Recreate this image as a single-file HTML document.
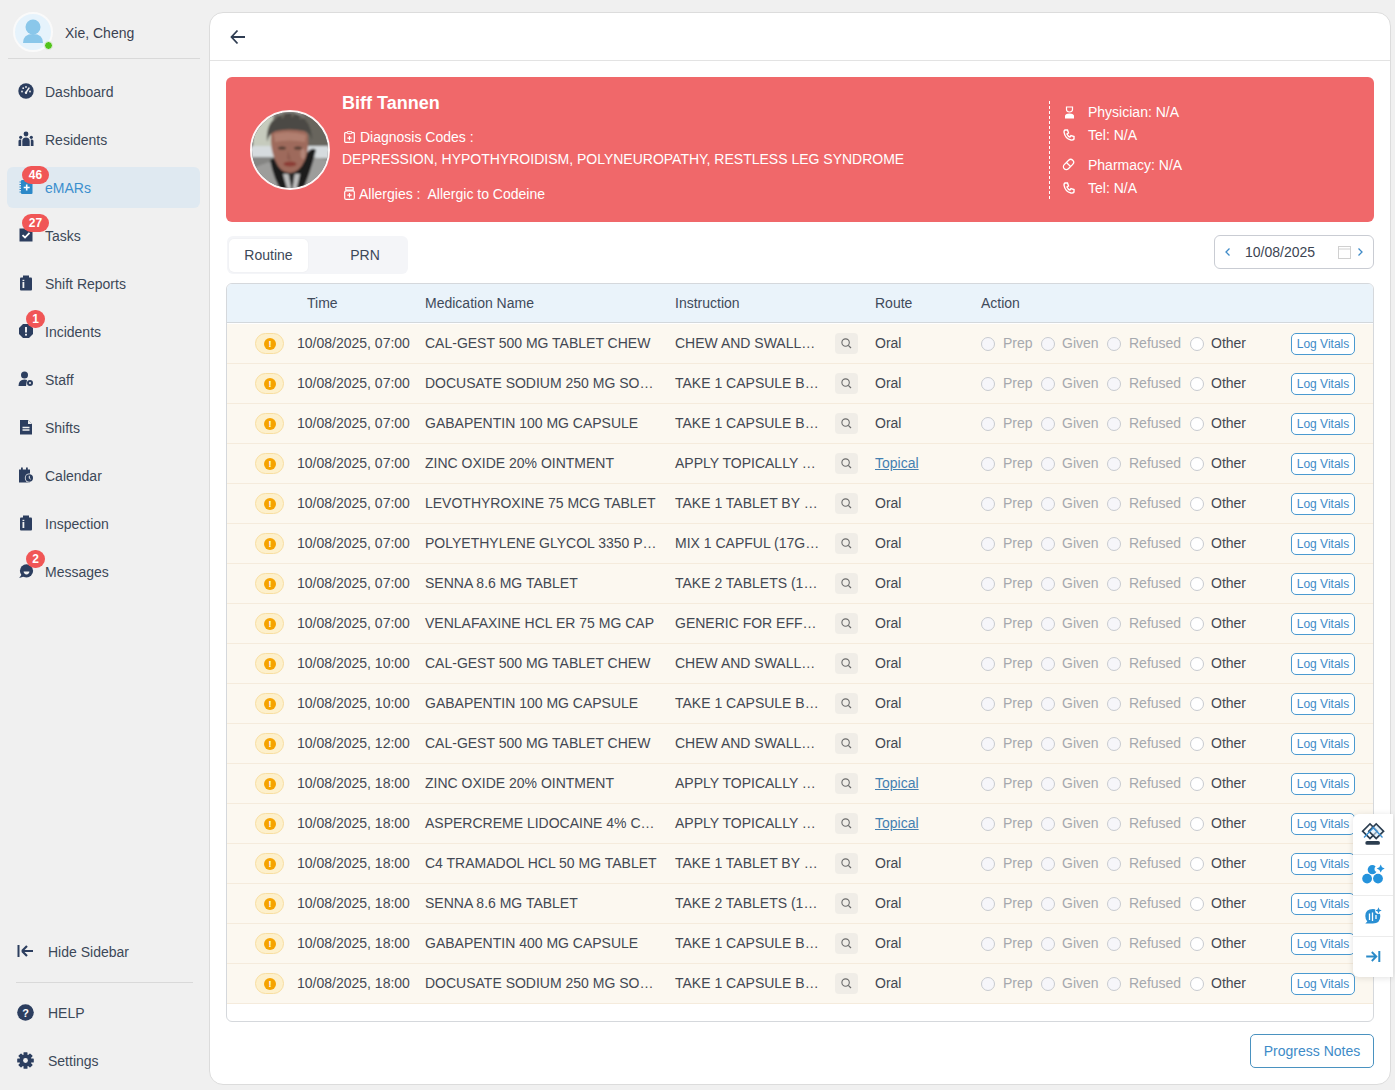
<!DOCTYPE html>
<html><head><meta charset="utf-8"><style>
*{box-sizing:border-box;margin:0;padding:0}
html,body{width:1395px;height:1090px;overflow:hidden}
body{background:#f0f0f0;font-family:"Liberation Sans",sans-serif;font-size:14px;color:#3c4858;position:relative}
.abs{position:absolute}
.avatar{position:absolute;left:13px;top:12px;width:40px;height:40px;border-radius:50%;background:#e6f3fc;border:2px solid #fafafa;overflow:hidden}
.gdot{position:absolute;left:44px;top:41px;width:9px;height:9px;border-radius:50%;background:#52c41a;border:1px solid #f0f0f0}
.uname{position:absolute;left:65px;top:25px;font-size:14px;color:#3a4150;line-height:16px}
.sep{position:absolute;height:1px;background:#d9d9d9}
.nav{position:absolute;left:7px;width:193px;height:41px}
.nav.active{background:#dfe9f1;border-radius:6px}
.nav .ic{position:absolute;left:11px;top:12px;width:16px;height:16px}
.nav .ic svg{display:block}
.nav .nt{position:absolute;left:38px;top:13px;line-height:16px;color:#3c4858}
.nav.active .nt{color:#3b8fce}
.badge{position:absolute;left:15px;top:-1px;height:18px;border-radius:9px;background:#f05656;color:#fff;font-size:12px;font-weight:bold;line-height:18px;text-align:center}
.card{position:absolute;left:209px;top:12px;width:1182px;height:1073px;background:#fff;border:1px solid #dcdcdc;border-radius:14px}
.hdr{position:absolute;left:0;top:0;width:100%;height:48px;border-bottom:1px solid #e3e3e3}
.banner{position:absolute;left:226px;top:77px;width:1148px;height:145px;background:#f0686a;border-radius:6px;color:#fff}
.banner .t{position:absolute;line-height:16px;white-space:nowrap}
.photo{position:absolute;left:24px;top:33px;width:80px;height:80px;border-radius:50%;border:2px solid #fdf6f6;overflow:hidden;background:#777}
.tabs{position:absolute;left:227px;top:236px;width:181px;height:38px;background:#f4f5f8;border-radius:6px}
.tab{position:absolute;top:3px;height:33px;line-height:33px;text-align:center;color:#3c4858}
.tab.on{background:#fff;border-radius:5px;box-shadow:0 0 2px rgba(0,0,0,.06)}
.dp{position:absolute;left:1214px;top:235px;width:160px;height:34px;border:1px solid #c9ccd3;border-radius:6px}
.tbl{position:absolute;left:226px;top:283px;width:1148px;height:739px;border:1px solid #d5d8dc;border-radius:6px;overflow:hidden}
.th{position:absolute;left:0;top:0;width:100%;height:39px;background:#eaf3fa;border-bottom:1px solid #d3d8dc}
.th span{position:absolute;top:11px;line-height:16px;color:#3f4a5a}
.body{position:absolute;left:0;top:40px;width:100%}
.row{position:absolute;left:0;width:100%;height:40px;background:#fcf8f0;border-bottom:1px solid #f5ebdc}
.c{position:absolute;top:11px;line-height:16px;white-space:nowrap;color:#434853}
.time{left:70px} .med{left:198px} .ins{left:448px} .route{left:648px}
.dis{color:#a6a9ae}
.link{color:#4580b0;text-decoration:underline}
.pill{position:absolute;left:28px;top:9px;width:29px;height:21px;border-radius:11px;background:#fdf0cc;border:1px solid #f8dea0}
.dot{position:absolute;left:8px;top:4px;width:12px;height:12px;border-radius:50%;background:#f5a300;color:#fff;font-size:9px;line-height:12px;text-align:center;font-weight:bold}
.sbtn{position:absolute;left:608px;top:9px;width:23px;height:21px;border-radius:4px;background:#f0ede7}
.sbtn svg{position:absolute;left:6px;top:5px}
.radio{position:absolute;top:13px;width:14px;height:14px;border-radius:50%;border:1px solid #c8cbd0;background:#f6f6fa}
.radio.r2{background:#fff;border-color:#c8cbd0}
.lv{position:absolute;left:1064px;top:9px;width:64px;height:22px;border:1px solid #4a9ad0;border-radius:5px;font-size:12px;line-height:20px;text-align:center;color:#3e8bc8;background:#fff}
.pn{position:absolute;left:1250px;top:1034px;width:124px;height:34px;border:1px solid #4a92c0;border-radius:5px;color:#3e8bc8;line-height:32px;text-align:center;font-size:14px}
.tool{position:absolute;left:1353px;top:814px;width:40px;height:163px;background:#fff;border-radius:6px 0 0 6px;box-shadow:0 1px 6px rgba(0,0,0,.12)}
.tool .s{position:absolute;left:0;width:40px;height:1px;background:#ececec}
.tool svg{position:absolute}
</style></head><body>
<div class="avatar"><svg width="36" height="36" viewBox="0 0 36 36" style="position:absolute;left:0;top:0"><circle cx="18" cy="13" r="7.5" fill="#8ac7ea"/><path d="M8 29 Q8 20 18 20 Q28 20 28 29 Z" fill="#8ac7ea"/></svg></div>
<div class="gdot"></div>
<div class="uname">Xie, Cheng</div>
<div class="sep" style="left:8px;top:58px;width:192px"></div>
<div class="nav" style="top:71px"><span class="ic"><svg width="16" height="16" viewBox="0 0 16 16"><circle cx="8" cy="8" r="7.7" fill="#2c3e5f"/><circle cx="4" cy="8.5" r="0.9" fill="#f0f0f0"/><circle cx="5.2" cy="5.2" r="0.9" fill="#f0f0f0"/><circle cx="8" cy="4" r="0.9" fill="#f0f0f0"/><circle cx="12" cy="8.5" r="0.9" fill="#f0f0f0"/><path d="M8 9.5 L11 5" stroke="#f0f0f0" stroke-width="1.4" stroke-linecap="round"/><circle cx="8" cy="9.8" r="1.2" fill="#f0f0f0"/></svg></span><span class="nt">Dashboard</span></div>
<div class="nav" style="top:119px"><span class="ic"><svg width="16" height="16" viewBox="0 0 16 16"><circle cx="8" cy="3" r="2.4" fill="#2c3e5f"/><circle cx="2.7" cy="6.3" r="1.6" fill="#2c3e5f"/><circle cx="13.3" cy="6.3" r="1.6" fill="#2c3e5f"/><path d="M4.3 15 V10.2 Q4.3 6.5 8 6.5 Q11.7 6.5 11.7 10.2 V15 Z" fill="#2c3e5f"/><path d="M0.5 15 V10 Q0.5 8.5 2 8.5 H3.2 V15Z M15.5 15 V10 Q15.5 8.5 14 8.5 H12.8 V15Z" fill="#2c3e5f"/></svg></span><span class="nt">Residents</span></div>
<div class="nav active" style="top:167px"><span class="ic"><svg width="16" height="16" viewBox="0 0 16 16"><rect x="3" y="1" width="11.5" height="14" rx="1" fill="#2b88c8"/><path d="M1.5 3h3M1.5 5.5h3M1.5 8h3M1.5 10.5h3M1.5 13h3" stroke="#2b88c8" stroke-width="1.2"/><path d="M8.7 5.5v6M5.7 8.5h6" stroke="#fff" stroke-width="1.6"/></svg></span><span class="nt">eMARs</span><span class="badge" style="width:27px;left:15px">46</span></div>
<div class="nav" style="top:215px"><span class="ic"><svg width="16" height="16" viewBox="0 0 16 16"><rect x="1.5" y="1.5" width="13" height="13" fill="#2c3e5f"/><path d="M4.5 8.2 L7 10.5 L11.5 5.8" stroke="#fff" stroke-width="1.8" fill="none"/></svg></span><span class="nt">Tasks</span><span class="badge" style="width:27px;left:15px">27</span></div>
<div class="nav" style="top:263px"><span class="ic"><svg width="16" height="16" viewBox="0 0 16 16"><rect x="2" y="2.5" width="12" height="13" rx="1" fill="#2c3e5f"/><rect x="5" y="0.5" width="6" height="3" fill="#2c3e5f"/><rect x="4.5" y="7" width="1.8" height="6" fill="#f0f0f0"/><rect x="4.5" y="4.8" width="1.8" height="1.3" fill="#f0f0f0"/></svg></span><span class="nt">Shift Reports</span></div>
<div class="nav" style="top:311px"><span class="ic"><svg width="16" height="16" viewBox="0 0 16 16"><path d="M5 1h6l4 4v6l-4 4H5l-4-4V5z" fill="#2c3e5f"/><rect x="7.1" y="4" width="1.8" height="5.5" fill="#fff"/><rect x="7.1" y="10.8" width="1.8" height="1.8" fill="#fff"/></svg></span><span class="nt">Incidents</span><span class="badge" style="width:19px;left:19px">1</span></div>
<div class="nav" style="top:359px"><span class="ic"><svg width="16" height="16" viewBox="0 0 16 16"><circle cx="6.5" cy="4" r="3.5" fill="#2c3e5f"/><path d="M0.5 15 Q0.5 8.5 6.5 8.5 Q8 8.5 9 9 L8 15Z" fill="#2c3e5f"/><circle cx="12" cy="12" r="3" fill="#2c3e5f"/><circle cx="12" cy="12" r="1" fill="#f0f0f0"/></svg></span><span class="nt">Staff</span></div>
<div class="nav" style="top:407px"><span class="ic"><svg width="16" height="16" viewBox="0 0 16 16"><path d="M2 1h8l4 4v10.5H2z" fill="#2c3e5f"/><path d="M10 1v4h4" fill="#f0f0f0"/><path d="M4.5 8.5h7M4.5 11h7" stroke="#f0f0f0" stroke-width="1.3"/></svg></span><span class="nt">Shifts</span></div>
<div class="nav" style="top:455px"><span class="ic"><svg width="16" height="16" viewBox="0 0 16 16"><rect x="1" y="2.5" width="11" height="13" fill="#2c3e5f"/><rect x="3" y="0.5" width="1.8" height="3" fill="#2c3e5f"/><rect x="8" y="0.5" width="1.8" height="3" fill="#2c3e5f"/><circle cx="11.3" cy="11" r="4.5" fill="#f0f0f0"/><circle cx="11.3" cy="11" r="3.7" fill="#2c3e5f"/><path d="M11.3 8.8v2.4l1.4 1" stroke="#f0f0f0" stroke-width="1" fill="none"/></svg></span><span class="nt">Calendar</span></div>
<div class="nav" style="top:503px"><span class="ic"><svg width="16" height="16" viewBox="0 0 16 16"><rect x="2" y="2.5" width="12" height="13" rx="1" fill="#2c3e5f"/><rect x="5" y="0.5" width="6" height="3" fill="#2c3e5f"/><rect x="4.5" y="7" width="1.8" height="6" fill="#f0f0f0"/><rect x="4.5" y="4.8" width="1.8" height="1.3" fill="#f0f0f0"/></svg></span><span class="nt">Inspection</span></div>
<div class="nav" style="top:551px"><span class="ic"><svg width="16" height="16" viewBox="0 0 16 16"><circle cx="8.5" cy="7.8" r="6.6" fill="#2c3e5f"/><path d="M1.2 15 L4 11 L6 13.5Z" fill="#2c3e5f"/><path d="M5.6 8.6 H11.4 Q11.2 11.4 8.5 11.4 Q5.8 11.4 5.6 8.6Z" fill="#f0f0f0"/></svg></span><span class="nt">Messages</span><span class="badge" style="width:19px;left:19px">2</span></div>
<div class="nav" style="top:931px"><span class="ic" style="left:10px;top:13px"><svg width="17" height="14" viewBox="0 0 17 14"><rect x="0.5" y="1" width="2" height="12" fill="#2c3e5f"/><path d="M5 7 L10 2 M5 7 L10 12 M5.5 7 H16" stroke="#2c3e5f" stroke-width="2.2" fill="none"/></svg></span><span class="nt" style="left:41px">Hide Sidebar</span></div>
<div class="sep" style="left:16px;top:982px;width:177px"></div>
<div class="nav" style="top:992px"><span class="ic" style="left:10px;top:12px"><svg width="17" height="17" viewBox="0 0 17 17"><circle cx="8.5" cy="8.5" r="8.3" fill="#2c3e5f"/><text x="8.5" y="12.6" font-family="Liberation Sans" font-weight="bold" font-size="11" fill="#fff" text-anchor="middle">?</text></svg></span><span class="nt" style="left:41px">HELP</span></div>
<div class="nav" style="top:1040px"><span class="ic" style="left:10px;top:12px"><svg width="17" height="17" viewBox="0 0 17 17"><g transform="translate(8.5 8.5)"><circle r="6" fill="#2c3e5f"/><g fill="#2c3e5f"><rect x="-2" y="-8.3" width="4" height="4" rx="0.6"/><rect x="-2" y="4.3" width="4" height="4" rx="0.6"/><rect x="-8.3" y="-2" width="4" height="4" rx="0.6"/><rect x="4.3" y="-2" width="4" height="4" rx="0.6"/><g transform="rotate(45)"><rect x="-2" y="-8.3" width="4" height="4" rx="0.6"/><rect x="-2" y="4.3" width="4" height="4" rx="0.6"/><rect x="-8.3" y="-2" width="4" height="4" rx="0.6"/><rect x="4.3" y="-2" width="4" height="4" rx="0.6"/></g></g><circle r="2.4" fill="#f0f0f0"/></g></svg></span><span class="nt" style="left:41px">Settings</span></div>

<div class="card"><div class="hdr">
<svg width="16" height="16" viewBox="0 0 16 16" style="position:absolute;left:20px;top:16px"><path d="M7.5 1.5 L1.5 8 L7.5 14.5 M1.5 8 H15" stroke="#2f3d52" stroke-width="1.8" fill="none"/></svg>
</div></div>

<div class="banner">
<div class="photo"><svg width="76" height="76" viewBox="0 0 76 76"><defs><filter id="bl" x="-20%" y="-20%" width="140%" height="140%"><feGaussianBlur stdDeviation="1.1"/></filter></defs><g filter="url(#bl)">
<rect x="-5" y="-5" width="86" height="86" fill="#8a8a86"/>
<rect x="-5" y="-5" width="26" height="42" fill="#c6cbbd"/>
<rect x="-5" y="24" width="6" height="14" fill="#3a3a36"/>
<rect x="52" y="-5" width="30" height="42" fill="#67655d"/>
<rect x="-5" y="34" width="86" height="12" fill="#d6dbde"/>
<rect x="-5" y="45" width="30" height="20" fill="#858583"/>
<path d="M-5 80 V60 Q8 52 22 49 L56 44 Q68 46 81 50 V80Z" fill="#9d9d9b"/>
<path d="M18 48 Q22 68 30 80 H50 Q58 62 64 38 Q60 34 54 42 Q50 56 40 60 Q28 58 22 46Z" fill="#1d1d1e"/>
<path d="M31 62 L36 80 H44 L48 62Z" fill="#bdbdbd"/>
<path d="M36 60 L40 80 L43 60Z" fill="#2a2a2a"/>
<path d="M19 22 Q19 17 37 16 Q56 17 56 24 Q57 38 53 48 Q47 61 38 61 Q28 61 23 48 Q18 36 19 22Z" fill="#9e6a5c"/>
<path d="M22 22 Q37 18 54 23 L53 30 Q37 27 23 30Z" fill="#b58474" opacity="0.8"/>
<path d="M15 30 Q13 4 37 1 Q59 2 60 28 Q58 20 52 19 Q37 16 24 19 Q17 21 15 30Z" fill="#4c4944"/>
<path d="M22 8 L26 2 M30 6 L33 0 M40 5 L42 -1 M48 7 L52 1" stroke="#6c6760" stroke-width="2"/>
<ellipse cx="30" cy="36" rx="4" ry="1.6" fill="#4f3a33"/>
<ellipse cx="46" cy="36" rx="4" ry="1.6" fill="#4f3a33"/>
<path d="M36 38 L35 47 L39 48Z" fill="#8e5c50"/>
<ellipse cx="38" cy="52" rx="6.5" ry="2.4" fill="#8c3d36"/>
<ellipse cx="51" cy="42" rx="2.5" ry="5" fill="#c29888" opacity="0.6"/>
</g></svg></div>
<div class="t" style="left:116px;top:16px;font-size:18px;font-weight:bold;line-height:20px">Biff Tannen</div>
<svg width="11" height="12" viewBox="0 0 11 12" style="position:absolute;left:118px;top:54px"><rect x="0.7" y="1.6" width="9.6" height="9.8" rx="0.8" stroke="#fff" stroke-width="1.2" fill="none"/><rect x="3.2" y="0.3" width="4.6" height="2.4" rx="0.8" stroke="#fff" stroke-width="1" fill="#f0686a"/><path d="M5.5 5v4.2M3.4 7.1h4.2" stroke="#fff" stroke-width="1.2"/></svg>
<div class="t" style="left:134px;top:52px">Diagnosis Codes :</div>
<div class="t" style="left:116px;top:74px">DEPRESSION, HYPOTHYROIDISM, POLYNEUROPATHY, RESTLESS LEG SYNDROME</div>
<svg width="11" height="13" viewBox="0 0 11 13" style="position:absolute;left:118px;top:110px"><rect x="0.7" y="3.8" width="9.6" height="8.6" rx="1.5" stroke="#fff" stroke-width="1.2" fill="none"/><rect x="1.8" y="0.6" width="7.4" height="2.4" stroke="#fff" stroke-width="1.1" fill="none"/><path d="M5.5 6v4.4M3.3 8.2h4.4" stroke="#fff" stroke-width="1.2"/></svg>
<div class="t" style="left:133px;top:109px">Allergies :&nbsp; Allergic to Codeine</div>
<div style="position:absolute;left:823px;top:24px;width:0;height:98px;border-left:1px dashed #fff"></div>
<svg width="11" height="13" viewBox="0 0 11 13" style="position:absolute;left:838px;top:29px"><path d="M2.5 1h6v2.5Q8.5 6 5.5 6Q2.5 6 2.5 3.5Z" stroke="#fff" stroke-width="1.2" fill="none"/><path d="M1 12.5V10Q1 7.5 5.5 7.5Q10 7.5 10 10V12.5Z" fill="#fff"/></svg>
<div class="t" style="left:862px;top:27px">Physician: N/A</div>
<svg width="12" height="12" viewBox="0 0 12 12" style="position:absolute;left:837px;top:52px"><path d="M2 1 L4.5 1 L5.5 4 L4 5 Q5 7.5 7 8 L8 6.5 L11 7.5 V10 Q10 11.5 8 11 Q2 9.5 1 3 Q1 1.5 2 1Z" stroke="#fff" stroke-width="1.4" fill="none"/></svg>
<div class="t" style="left:862px;top:50px">Tel: N/A</div>
<svg width="13" height="13" viewBox="0 0 13 13" style="position:absolute;left:836px;top:81px"><g transform="rotate(-45 6.5 6.5)"><rect x="0.5" y="3.6" width="12" height="5.8" rx="2.9" stroke="#fff" stroke-width="1.3" fill="none"/><path d="M6.5 3.6 V9.4" stroke="#fff" stroke-width="1.3"/></g></svg>
<div class="t" style="left:862px;top:80px">Pharmacy: N/A</div>
<svg width="12" height="12" viewBox="0 0 12 12" style="position:absolute;left:837px;top:105px"><path d="M2 1 L4.5 1 L5.5 4 L4 5 Q5 7.5 7 8 L8 6.5 L11 7.5 V10 Q10 11.5 8 11 Q2 9.5 1 3 Q1 1.5 2 1Z" stroke="#fff" stroke-width="1.4" fill="none"/></svg>
<div class="t" style="left:862px;top:103px">Tel: N/A</div>
</div>

<div class="tabs"><div class="tab on" style="left:2px;width:79px">Routine</div><div class="tab" style="left:98px;width:80px">PRN</div></div>

<div class="dp">
<svg width="8" height="10" viewBox="0 0 8 10" style="position:absolute;left:9px;top:11px"><path d="M5.5 1.5 L2 5 L5.5 8.5" stroke="#3f8bc8" stroke-width="1.3" fill="none"/></svg>
<span style="position:absolute;left:30px;top:8px;line-height:16px;color:#3c4452">10/08/2025</span>
<svg width="13" height="13" viewBox="0 0 13 13" style="position:absolute;left:123px;top:10px"><rect x="0.5" y="0.5" width="12" height="12" stroke="#d0d0d0" fill="none"/><path d="M0.5 3H12.5" stroke="#d0d0d0"/></svg>
<svg width="8" height="10" viewBox="0 0 8 10" style="position:absolute;left:141px;top:11px"><path d="M2.5 1.5 L6 5 L2.5 8.5" stroke="#3f8bc8" stroke-width="1.3" fill="none"/></svg>
</div>

<div class="tbl">
<div class="th"><span style="left:80px">Time</span><span style="left:198px">Medication Name</span><span style="left:448px">Instruction</span><span style="left:648px">Route</span><span style="left:754px">Action</span></div>
<div class="body">
<div class="row" style="top:0px">
<span class="pill"><span class="dot">!</span></span>
<span class="c time">10/08/2025, 07:00</span>
<span class="c med">CAL-GEST 500 MG TABLET CHEW</span>
<span class="c ins">CHEW AND SWALL…</span>
<span class="sbtn"><svg width="11" height="11" viewBox="0 0 11 11"><circle cx="4.6" cy="4.6" r="3.7" stroke="#6b6b6b" stroke-width="1.1" fill="none"/><path d="M7.3 7.3 L10 10" stroke="#6b6b6b" stroke-width="1.2"/></svg></span>
<span class="c route">Oral</span>
<span class="radio" style="left:754px"></span><span class="c dis" style="left:776px">Prep</span>
<span class="radio" style="left:814px"></span><span class="c dis" style="left:835px">Given</span>
<span class="radio" style="left:880px"></span><span class="c dis" style="left:902px">Refused</span>
<span class="radio r2" style="left:963px"></span><span class="c" style="left:984px">Other</span>
<span class="lv">Log Vitals</span>
</div><div class="row" style="top:40px">
<span class="pill"><span class="dot">!</span></span>
<span class="c time">10/08/2025, 07:00</span>
<span class="c med">DOCUSATE SODIUM 250 MG SO…</span>
<span class="c ins">TAKE 1 CAPSULE B…</span>
<span class="sbtn"><svg width="11" height="11" viewBox="0 0 11 11"><circle cx="4.6" cy="4.6" r="3.7" stroke="#6b6b6b" stroke-width="1.1" fill="none"/><path d="M7.3 7.3 L10 10" stroke="#6b6b6b" stroke-width="1.2"/></svg></span>
<span class="c route">Oral</span>
<span class="radio" style="left:754px"></span><span class="c dis" style="left:776px">Prep</span>
<span class="radio" style="left:814px"></span><span class="c dis" style="left:835px">Given</span>
<span class="radio" style="left:880px"></span><span class="c dis" style="left:902px">Refused</span>
<span class="radio r2" style="left:963px"></span><span class="c" style="left:984px">Other</span>
<span class="lv">Log Vitals</span>
</div><div class="row" style="top:80px">
<span class="pill"><span class="dot">!</span></span>
<span class="c time">10/08/2025, 07:00</span>
<span class="c med">GABAPENTIN 100 MG CAPSULE</span>
<span class="c ins">TAKE 1 CAPSULE B…</span>
<span class="sbtn"><svg width="11" height="11" viewBox="0 0 11 11"><circle cx="4.6" cy="4.6" r="3.7" stroke="#6b6b6b" stroke-width="1.1" fill="none"/><path d="M7.3 7.3 L10 10" stroke="#6b6b6b" stroke-width="1.2"/></svg></span>
<span class="c route">Oral</span>
<span class="radio" style="left:754px"></span><span class="c dis" style="left:776px">Prep</span>
<span class="radio" style="left:814px"></span><span class="c dis" style="left:835px">Given</span>
<span class="radio" style="left:880px"></span><span class="c dis" style="left:902px">Refused</span>
<span class="radio r2" style="left:963px"></span><span class="c" style="left:984px">Other</span>
<span class="lv">Log Vitals</span>
</div><div class="row" style="top:120px">
<span class="pill"><span class="dot">!</span></span>
<span class="c time">10/08/2025, 07:00</span>
<span class="c med">ZINC OXIDE 20% OINTMENT</span>
<span class="c ins">APPLY TOPICALLY …</span>
<span class="sbtn"><svg width="11" height="11" viewBox="0 0 11 11"><circle cx="4.6" cy="4.6" r="3.7" stroke="#6b6b6b" stroke-width="1.1" fill="none"/><path d="M7.3 7.3 L10 10" stroke="#6b6b6b" stroke-width="1.2"/></svg></span>
<span class="c route"><span class="link">Topical</span></span>
<span class="radio" style="left:754px"></span><span class="c dis" style="left:776px">Prep</span>
<span class="radio" style="left:814px"></span><span class="c dis" style="left:835px">Given</span>
<span class="radio" style="left:880px"></span><span class="c dis" style="left:902px">Refused</span>
<span class="radio r2" style="left:963px"></span><span class="c" style="left:984px">Other</span>
<span class="lv">Log Vitals</span>
</div><div class="row" style="top:160px">
<span class="pill"><span class="dot">!</span></span>
<span class="c time">10/08/2025, 07:00</span>
<span class="c med">LEVOTHYROXINE 75 MCG TABLET</span>
<span class="c ins">TAKE 1 TABLET BY …</span>
<span class="sbtn"><svg width="11" height="11" viewBox="0 0 11 11"><circle cx="4.6" cy="4.6" r="3.7" stroke="#6b6b6b" stroke-width="1.1" fill="none"/><path d="M7.3 7.3 L10 10" stroke="#6b6b6b" stroke-width="1.2"/></svg></span>
<span class="c route">Oral</span>
<span class="radio" style="left:754px"></span><span class="c dis" style="left:776px">Prep</span>
<span class="radio" style="left:814px"></span><span class="c dis" style="left:835px">Given</span>
<span class="radio" style="left:880px"></span><span class="c dis" style="left:902px">Refused</span>
<span class="radio r2" style="left:963px"></span><span class="c" style="left:984px">Other</span>
<span class="lv">Log Vitals</span>
</div><div class="row" style="top:200px">
<span class="pill"><span class="dot">!</span></span>
<span class="c time">10/08/2025, 07:00</span>
<span class="c med">POLYETHYLENE GLYCOL 3350 P…</span>
<span class="c ins">MIX 1 CAPFUL (17G…</span>
<span class="sbtn"><svg width="11" height="11" viewBox="0 0 11 11"><circle cx="4.6" cy="4.6" r="3.7" stroke="#6b6b6b" stroke-width="1.1" fill="none"/><path d="M7.3 7.3 L10 10" stroke="#6b6b6b" stroke-width="1.2"/></svg></span>
<span class="c route">Oral</span>
<span class="radio" style="left:754px"></span><span class="c dis" style="left:776px">Prep</span>
<span class="radio" style="left:814px"></span><span class="c dis" style="left:835px">Given</span>
<span class="radio" style="left:880px"></span><span class="c dis" style="left:902px">Refused</span>
<span class="radio r2" style="left:963px"></span><span class="c" style="left:984px">Other</span>
<span class="lv">Log Vitals</span>
</div><div class="row" style="top:240px">
<span class="pill"><span class="dot">!</span></span>
<span class="c time">10/08/2025, 07:00</span>
<span class="c med">SENNA 8.6 MG TABLET</span>
<span class="c ins">TAKE 2 TABLETS (1…</span>
<span class="sbtn"><svg width="11" height="11" viewBox="0 0 11 11"><circle cx="4.6" cy="4.6" r="3.7" stroke="#6b6b6b" stroke-width="1.1" fill="none"/><path d="M7.3 7.3 L10 10" stroke="#6b6b6b" stroke-width="1.2"/></svg></span>
<span class="c route">Oral</span>
<span class="radio" style="left:754px"></span><span class="c dis" style="left:776px">Prep</span>
<span class="radio" style="left:814px"></span><span class="c dis" style="left:835px">Given</span>
<span class="radio" style="left:880px"></span><span class="c dis" style="left:902px">Refused</span>
<span class="radio r2" style="left:963px"></span><span class="c" style="left:984px">Other</span>
<span class="lv">Log Vitals</span>
</div><div class="row" style="top:280px">
<span class="pill"><span class="dot">!</span></span>
<span class="c time">10/08/2025, 07:00</span>
<span class="c med">VENLAFAXINE HCL ER 75 MG CAP</span>
<span class="c ins">GENERIC FOR EFF…</span>
<span class="sbtn"><svg width="11" height="11" viewBox="0 0 11 11"><circle cx="4.6" cy="4.6" r="3.7" stroke="#6b6b6b" stroke-width="1.1" fill="none"/><path d="M7.3 7.3 L10 10" stroke="#6b6b6b" stroke-width="1.2"/></svg></span>
<span class="c route">Oral</span>
<span class="radio" style="left:754px"></span><span class="c dis" style="left:776px">Prep</span>
<span class="radio" style="left:814px"></span><span class="c dis" style="left:835px">Given</span>
<span class="radio" style="left:880px"></span><span class="c dis" style="left:902px">Refused</span>
<span class="radio r2" style="left:963px"></span><span class="c" style="left:984px">Other</span>
<span class="lv">Log Vitals</span>
</div><div class="row" style="top:320px">
<span class="pill"><span class="dot">!</span></span>
<span class="c time">10/08/2025, 10:00</span>
<span class="c med">CAL-GEST 500 MG TABLET CHEW</span>
<span class="c ins">CHEW AND SWALL…</span>
<span class="sbtn"><svg width="11" height="11" viewBox="0 0 11 11"><circle cx="4.6" cy="4.6" r="3.7" stroke="#6b6b6b" stroke-width="1.1" fill="none"/><path d="M7.3 7.3 L10 10" stroke="#6b6b6b" stroke-width="1.2"/></svg></span>
<span class="c route">Oral</span>
<span class="radio" style="left:754px"></span><span class="c dis" style="left:776px">Prep</span>
<span class="radio" style="left:814px"></span><span class="c dis" style="left:835px">Given</span>
<span class="radio" style="left:880px"></span><span class="c dis" style="left:902px">Refused</span>
<span class="radio r2" style="left:963px"></span><span class="c" style="left:984px">Other</span>
<span class="lv">Log Vitals</span>
</div><div class="row" style="top:360px">
<span class="pill"><span class="dot">!</span></span>
<span class="c time">10/08/2025, 10:00</span>
<span class="c med">GABAPENTIN 100 MG CAPSULE</span>
<span class="c ins">TAKE 1 CAPSULE B…</span>
<span class="sbtn"><svg width="11" height="11" viewBox="0 0 11 11"><circle cx="4.6" cy="4.6" r="3.7" stroke="#6b6b6b" stroke-width="1.1" fill="none"/><path d="M7.3 7.3 L10 10" stroke="#6b6b6b" stroke-width="1.2"/></svg></span>
<span class="c route">Oral</span>
<span class="radio" style="left:754px"></span><span class="c dis" style="left:776px">Prep</span>
<span class="radio" style="left:814px"></span><span class="c dis" style="left:835px">Given</span>
<span class="radio" style="left:880px"></span><span class="c dis" style="left:902px">Refused</span>
<span class="radio r2" style="left:963px"></span><span class="c" style="left:984px">Other</span>
<span class="lv">Log Vitals</span>
</div><div class="row" style="top:400px">
<span class="pill"><span class="dot">!</span></span>
<span class="c time">10/08/2025, 12:00</span>
<span class="c med">CAL-GEST 500 MG TABLET CHEW</span>
<span class="c ins">CHEW AND SWALL…</span>
<span class="sbtn"><svg width="11" height="11" viewBox="0 0 11 11"><circle cx="4.6" cy="4.6" r="3.7" stroke="#6b6b6b" stroke-width="1.1" fill="none"/><path d="M7.3 7.3 L10 10" stroke="#6b6b6b" stroke-width="1.2"/></svg></span>
<span class="c route">Oral</span>
<span class="radio" style="left:754px"></span><span class="c dis" style="left:776px">Prep</span>
<span class="radio" style="left:814px"></span><span class="c dis" style="left:835px">Given</span>
<span class="radio" style="left:880px"></span><span class="c dis" style="left:902px">Refused</span>
<span class="radio r2" style="left:963px"></span><span class="c" style="left:984px">Other</span>
<span class="lv">Log Vitals</span>
</div><div class="row" style="top:440px">
<span class="pill"><span class="dot">!</span></span>
<span class="c time">10/08/2025, 18:00</span>
<span class="c med">ZINC OXIDE 20% OINTMENT</span>
<span class="c ins">APPLY TOPICALLY …</span>
<span class="sbtn"><svg width="11" height="11" viewBox="0 0 11 11"><circle cx="4.6" cy="4.6" r="3.7" stroke="#6b6b6b" stroke-width="1.1" fill="none"/><path d="M7.3 7.3 L10 10" stroke="#6b6b6b" stroke-width="1.2"/></svg></span>
<span class="c route"><span class="link">Topical</span></span>
<span class="radio" style="left:754px"></span><span class="c dis" style="left:776px">Prep</span>
<span class="radio" style="left:814px"></span><span class="c dis" style="left:835px">Given</span>
<span class="radio" style="left:880px"></span><span class="c dis" style="left:902px">Refused</span>
<span class="radio r2" style="left:963px"></span><span class="c" style="left:984px">Other</span>
<span class="lv">Log Vitals</span>
</div><div class="row" style="top:480px">
<span class="pill"><span class="dot">!</span></span>
<span class="c time">10/08/2025, 18:00</span>
<span class="c med">ASPERCREME LIDOCAINE 4% C…</span>
<span class="c ins">APPLY TOPICALLY …</span>
<span class="sbtn"><svg width="11" height="11" viewBox="0 0 11 11"><circle cx="4.6" cy="4.6" r="3.7" stroke="#6b6b6b" stroke-width="1.1" fill="none"/><path d="M7.3 7.3 L10 10" stroke="#6b6b6b" stroke-width="1.2"/></svg></span>
<span class="c route"><span class="link">Topical</span></span>
<span class="radio" style="left:754px"></span><span class="c dis" style="left:776px">Prep</span>
<span class="radio" style="left:814px"></span><span class="c dis" style="left:835px">Given</span>
<span class="radio" style="left:880px"></span><span class="c dis" style="left:902px">Refused</span>
<span class="radio r2" style="left:963px"></span><span class="c" style="left:984px">Other</span>
<span class="lv">Log Vitals</span>
</div><div class="row" style="top:520px">
<span class="pill"><span class="dot">!</span></span>
<span class="c time">10/08/2025, 18:00</span>
<span class="c med">C4 TRAMADOL HCL 50 MG TABLET</span>
<span class="c ins">TAKE 1 TABLET BY …</span>
<span class="sbtn"><svg width="11" height="11" viewBox="0 0 11 11"><circle cx="4.6" cy="4.6" r="3.7" stroke="#6b6b6b" stroke-width="1.1" fill="none"/><path d="M7.3 7.3 L10 10" stroke="#6b6b6b" stroke-width="1.2"/></svg></span>
<span class="c route">Oral</span>
<span class="radio" style="left:754px"></span><span class="c dis" style="left:776px">Prep</span>
<span class="radio" style="left:814px"></span><span class="c dis" style="left:835px">Given</span>
<span class="radio" style="left:880px"></span><span class="c dis" style="left:902px">Refused</span>
<span class="radio r2" style="left:963px"></span><span class="c" style="left:984px">Other</span>
<span class="lv">Log Vitals</span>
</div><div class="row" style="top:560px">
<span class="pill"><span class="dot">!</span></span>
<span class="c time">10/08/2025, 18:00</span>
<span class="c med">SENNA 8.6 MG TABLET</span>
<span class="c ins">TAKE 2 TABLETS (1…</span>
<span class="sbtn"><svg width="11" height="11" viewBox="0 0 11 11"><circle cx="4.6" cy="4.6" r="3.7" stroke="#6b6b6b" stroke-width="1.1" fill="none"/><path d="M7.3 7.3 L10 10" stroke="#6b6b6b" stroke-width="1.2"/></svg></span>
<span class="c route">Oral</span>
<span class="radio" style="left:754px"></span><span class="c dis" style="left:776px">Prep</span>
<span class="radio" style="left:814px"></span><span class="c dis" style="left:835px">Given</span>
<span class="radio" style="left:880px"></span><span class="c dis" style="left:902px">Refused</span>
<span class="radio r2" style="left:963px"></span><span class="c" style="left:984px">Other</span>
<span class="lv">Log Vitals</span>
</div><div class="row" style="top:600px">
<span class="pill"><span class="dot">!</span></span>
<span class="c time">10/08/2025, 18:00</span>
<span class="c med">GABAPENTIN 400 MG CAPSULE</span>
<span class="c ins">TAKE 1 CAPSULE B…</span>
<span class="sbtn"><svg width="11" height="11" viewBox="0 0 11 11"><circle cx="4.6" cy="4.6" r="3.7" stroke="#6b6b6b" stroke-width="1.1" fill="none"/><path d="M7.3 7.3 L10 10" stroke="#6b6b6b" stroke-width="1.2"/></svg></span>
<span class="c route">Oral</span>
<span class="radio" style="left:754px"></span><span class="c dis" style="left:776px">Prep</span>
<span class="radio" style="left:814px"></span><span class="c dis" style="left:835px">Given</span>
<span class="radio" style="left:880px"></span><span class="c dis" style="left:902px">Refused</span>
<span class="radio r2" style="left:963px"></span><span class="c" style="left:984px">Other</span>
<span class="lv">Log Vitals</span>
</div><div class="row" style="top:640px">
<span class="pill"><span class="dot">!</span></span>
<span class="c time">10/08/2025, 18:00</span>
<span class="c med">DOCUSATE SODIUM 250 MG SO…</span>
<span class="c ins">TAKE 1 CAPSULE B…</span>
<span class="sbtn"><svg width="11" height="11" viewBox="0 0 11 11"><circle cx="4.6" cy="4.6" r="3.7" stroke="#6b6b6b" stroke-width="1.1" fill="none"/><path d="M7.3 7.3 L10 10" stroke="#6b6b6b" stroke-width="1.2"/></svg></span>
<span class="c route">Oral</span>
<span class="radio" style="left:754px"></span><span class="c dis" style="left:776px">Prep</span>
<span class="radio" style="left:814px"></span><span class="c dis" style="left:835px">Given</span>
<span class="radio" style="left:880px"></span><span class="c dis" style="left:902px">Refused</span>
<span class="radio r2" style="left:963px"></span><span class="c" style="left:984px">Other</span>
<span class="lv">Log Vitals</span>
</div>
</div>
</div>

<div class="pn">Progress Notes</div>

<div class="tool">
<div class="s" style="top:40px"></div><div class="s" style="top:81px"></div><div class="s" style="top:122px"></div>
<svg width="40" height="163" viewBox="0 0 40 163" style="left:0;top:0">
<g transform="translate(17,17.2) rotate(45)"><rect x="-5.2" y="-5.2" width="10.4" height="10.4" stroke="#2c3e50" stroke-width="1.7" fill="none"/></g>
<g transform="translate(23.2,17.2) rotate(45)"><rect x="-5.2" y="-5.2" width="10.4" height="10.4" stroke="#2c3e50" stroke-width="1.7" fill="#d8ebf8" fill-opacity="0.6"/></g>
<path d="M11 23.5 L21 13 M29.5 23.5 L19.5 13" stroke="#3a8ed0" stroke-width="1.3"/>
<rect x="12.3" y="27" width="14.7" height="3.8" rx="1.9" fill="#2c3e50"/>
<circle cx="19.3" cy="55.7" r="4.6" fill="#2593dc"/>
<circle cx="14.1" cy="64.6" r="4.9" fill="#2593dc"/>
<circle cx="25" cy="64.6" r="4.9" fill="#2593dc"/>
<circle cx="24.5" cy="55" r="3" fill="#fff"/>
<path d="M27.7 50.6 L29 53.3 L31.7 54.6 L29 55.9 L27.7 58.6 L26.4 55.9 L23.7 54.6 L26.4 53.3Z" fill="#2593dc"/>
<path d="M20 95 Q27.3 95 27.3 102 Q27.3 109.6 19.8 109.6 L12.3 109.6 L14.3 107.6 Q12.3 105.5 12.3 102 Q12.3 95 20 95Z" fill="#2a8fd3"/>
<path d="M16.5 99.5v6.5M19.5 98.5v8.5M23 101v4" stroke="#fff" stroke-width="1.3"/>
<circle cx="25.5" cy="96.5" r="3.4" fill="#fff"/>
<path d="M25.5 93.3 L26.4 95.6 L28.7 96.5 L26.4 97.4 L25.5 99.7 L24.6 97.4 L22.3 96.5 L24.6 95.6Z" fill="#2a8fd3"/>
<path d="M13.2 142.5 H23.2 M18.8 138 L23.3 142.5 L18.8 147" stroke="#2a8ac8" stroke-width="1.9" fill="none"/>
<rect x="25.3" y="137" width="2" height="11" fill="#2a8ac8"/>
</svg>
</div>
</body></html>
